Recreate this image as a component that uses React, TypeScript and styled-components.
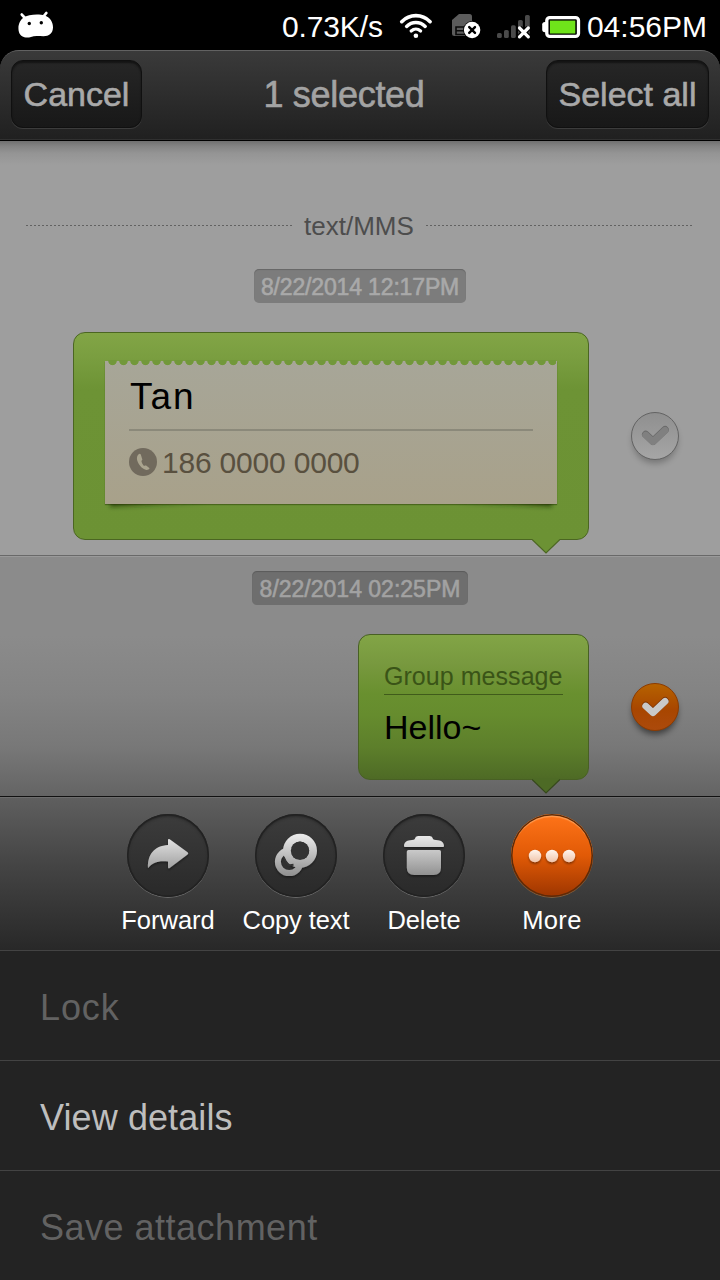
import React from 'react';
import styled, { createGlobalStyle } from 'styled-components';

const Global = createGlobalStyle`
  * { box-sizing: border-box; }
  html, body { margin: 0; padding: 0; background: #000; }
  body { font-family: "Liberation Sans", Arial, sans-serif; font-weight: 400; overflow: hidden; }
  svg { display: block; flex: none; }
`;

const Screen = styled.div`
  width: 720px;
  height: 1280px;
  display: flex;
  flex-direction: column;
  background: #000;
  overflow: hidden;
`;

/* ---------- status bar ---------- */

const StatusBar = styled.header`
  height: 50px;
  flex: none;
  display: flex;
  align-items: center;
  padding: 2px 13px 0 18px;
  color: #fff;
`;

const StatusText = styled.span<{ $spacing?: number }>`
  padding-top: 2px;
  font-size: 30px;
  line-height: 34px;
  white-space: nowrap;
  letter-spacing: ${(p) => p.$spacing ?? 0}px;
`;

const StatusIcons = styled.div`
  display: flex;
  align-items: center;
  margin: 0 6px 0 16px;
`;

const Spacer = styled.div`
  flex: 1;
`;

const Gap = styled.span<{ $w: number }>`
  width: ${(p) => p.$w}px;
  flex: none;
`;

/* ---------- title bar ---------- */

const TitleBar = styled.div`
  height: 91px;
  flex: none;
  display: flex;
  align-items: flex-start;
  justify-content: space-between;
  padding: 9px 11px 0;
  border-top: 1px solid #626262;
  border-bottom: 1px solid #000;
  border-radius: 19px 19px 0 0;
  background: linear-gradient(#3a3a3a, #202020);
  box-shadow: inset 0 -1px 0 #303030;
`;

const BarButton = styled.button<{ $width: number }>`
  width: ${(p) => p.$width}px;
  height: 68px;
  padding: 0 0 1px;
  border: 1px solid #101010;
  border-radius: 12px;
  background: linear-gradient(#262626, #181818);
  box-shadow: 0 1px 0 #3c3c3c, inset 0 2px 2px #131313;
  color: #a9a9a9;
  font: 34px/40px "Liberation Sans", Arial, sans-serif;
  -webkit-text-stroke: 0.6px #a9a9a9;
  white-space: nowrap;
`;

const Title = styled.h1`
  margin: 0;
  font-size: 36px;
  font-weight: 400;
  line-height: 70px;
  letter-spacing: -0.3px;
  color: #a3a3a3;
  -webkit-text-stroke: 0.6px #a3a3a3;
`;

/* ---------- conversation ---------- */

const Section = styled.section<{ $selected?: boolean }>`
  flex: none;
  display: flex;
  flex-direction: column;
  align-items: center;
  height: ${(p) => (p.$selected ? 240 : 415)}px;
  padding-top: ${(p) => (p.$selected ? 15 : 70)}px;
  border-bottom: ${(p) => (p.$selected ? 'none' : '1px solid #696969')};
  box-shadow: ${(p) => (p.$selected ? 'inset 0 1px 0 #9a9a9a' : 'none')};
  background: ${(p) =>
    p.$selected
      ? 'linear-gradient(#8b8b8b 0, #8b8b8b 80px, #838383 140px, #787878 190px, #646464 240px)'
      : 'linear-gradient(#707070 0, #838383 5px, #949494 12px, #9e9e9e 24px)'};
`;

const Channel = styled.div`
  align-self: stretch;
  display: flex;
  align-items: center;
  gap: 12px;
  padding: 0 27px 0 26px;
  height: 30px;
  margin-bottom: 28px;
  font-size: 26px;
  line-height: 30px;
  color: #4d4d4d;
`;

const DottedRule = styled.i<{ $width: number }>`
  flex: none;
  width: ${(p) => p.$width}px;
  height: 1px;
  margin-bottom: 1px;
  background: repeating-linear-gradient(90deg, #626262 0 2px, #9e9e9e 2px 4px);
`;

const DatePill = styled.time<{ $selected?: boolean; $spacing?: number }>`
  height: 34px;
  width: ${(p) => (p.$selected ? 216 : 212)}px;
  display: flex;
  justify-content: center;
  border-radius: 5px;
  background: ${(p) => (p.$selected ? '#6e6e6e' : '#7c7c7c')};
  box-shadow: inset 0 1px 1px rgba(0, 0, 0, 0.18);
  color: ${(p) => (p.$selected ? '#a2a2a2' : '#a9a9a9')};
  -webkit-text-stroke: 0.6px currentColor;
  font-size: 23px;
  line-height: 36px;
  white-space: nowrap;
  letter-spacing: ${(p) => p.$spacing ?? 0}px;
`;

const MessageRow = styled.div`
  align-self: stretch;
  display: flex;
  align-items: center;
  justify-content: flex-end;
  gap: 42px;
  margin-top: 29px;
  padding-right: 41px;
`;

const Bubble = styled.article<{ $w: number; $h: number; $dim?: boolean }>`
  position: relative;
  width: ${(p) => p.$w}px;
  height: ${(p) => p.$h}px;
  padding: ${(p) => (p.$dim ? '26px 25px' : '28px 31px')};
  border: 1px solid ${(p) => (p.$dim ? '#486024' : '#4b6622')};
  border-radius: 12px;
  background: ${(p) =>
    p.$dim
      ? 'linear-gradient(#82a546 0, #78993f 28px, #69902f 58px, #668c2e 80px, #5d7f2b 112px, #4d6925 146px)'
      : 'linear-gradient(#82a546 0, #7a9e40 24px, #6d9335 56px, #6c9234 100%)'};
`;

const Tail = styled.svg`
  position: absolute;
  right: 28px;
  bottom: -15px;
`;

const ContactCard = styled.div`
  position: relative;
  height: 143px;
  padding: 16px 24px 0;
  background: linear-gradient(#a7a698, #a8a18a);
  box-shadow: 0 1px 1px rgba(30, 50, 0, 0.45);

  &::before {
    content: '';
    position: absolute;
    top: -1px;
    left: 2px;
    width: 449px;
    height: 6px;
    background: radial-gradient(circle at 5.5px 1px, #72983a 3.8px, rgba(114, 152, 58, 0) 4.6px) 0 0 / 11px 6px repeat-x;
  }
`;

const CardShadow = styled.svg`
  position: absolute;
  left: 0;
  bottom: -12px;
`;

const ContactName = styled.div`
  height: 54px;
  padding-left: 1px;
  font-size: 37px;
  line-height: 39px;
  letter-spacing: 1.9px;
  color: #000;
  border-bottom: 2px solid #8b897a;
`;

const ContactPhone = styled.div`
  display: flex;
  align-items: center;
  gap: 4px;
  margin-top: 15px;
  font-size: 30px;
  line-height: 34px;
  letter-spacing: -0.2px;
  color: #59503f;
`;

const GroupLabel = styled.div`
  height: 34px;
  font-size: 25px;
  line-height: 31px;
  letter-spacing: 0.05px;
  white-space: nowrap;
  color: #3a5417;
  border-bottom: 1px solid #405b1b;
`;

const MessageText = styled.p`
  margin: 12px 0 0;
  font-size: 34px;
  line-height: 40px;
  color: #000;
`;

/* ---------- action panel ---------- */

const Toolbar = styled.nav`
  flex: none;
  height: 154px;
  display: flex;
  justify-content: center;
  padding-top: 16px;
  border-top: 1px solid #111;
  box-shadow: inset 0 1px 0 #6d6d6d;
  background: linear-gradient(#5f5f5f, #444 45%, #282828);
`;

const Action = styled.div<{ $spacing?: number }>`
  width: 128px;
  display: flex;
  flex-direction: column;
  align-items: center;
  font-size: 25.5px;
  line-height: 30px;
  letter-spacing: ${(p) => p.$spacing ?? 0}px;
  color: #fff;
  white-space: nowrap;
`;

const Disc = styled.div<{ $active?: boolean }>`
  width: 82px;
  height: 83px;
  margin: 1px 0 8px;
  border-radius: 50%;
  background: ${(p) =>
    p.$active ? 'linear-gradient(#ff7419, #e15a06 50%, #9d3500)' : 'linear-gradient(#3c3c3c, #292929)'};
  box-shadow: ${(p) =>
    p.$active
      ? 'inset 0 0 0 1.5px #5c2a08, inset 0 3px 1px 0 #ff9b50, 0 1px 0 #80603f'
      : 'inset 0 0 0 1.5px #222, inset 0 2px 3px #202020, 0 1px 0 #6a6a6a'};
`;

const MenuItem = styled.div<{ $disabled?: boolean; $spacing?: number }>`
  flex: none;
  height: 110px;
  padding: 36px 40px 0;
  border-top: 1px solid #434343;
  background: #232323;
  font-size: 36px;
  line-height: 42px;
  letter-spacing: ${(p) => p.$spacing ?? 0}px;
  color: ${(p) => (p.$disabled ? '#626262' : '#bebebe')};
`;

/* ---------- drawings ---------- */

const DroidIcon = () => (
  <svg width="36" height="30" viewBox="18 11 36 30">
    <path
      d="M24.5 17.5 21.8 14.6M43.5 16.5 46.3 13"
      stroke="#fff"
      strokeWidth="2.8"
      strokeLinecap="round"
    />
    <path
      d="M23.5 17.6C28 14.5 39 13.8 44.5 15.6C50 17.4 53 22 53 27.3C53 33.2 49 36.3 43.5 36.3C39 36.3 34.5 35.6 31 36.9C26 38.6 20.5 37 19 32.3C17.3 26.5 19.6 20.3 23.5 17.6Z"
      fill="#fff"
    />
    <circle cx="29.3" cy="23.5" r="1.7" fill="#000" />
    <circle cx="41.3" cy="22.7" r="1.7" fill="#000" />
  </svg>
);

const WifiIcon = () => (
  <svg width="34" height="28" viewBox="399 12 34 28" fill="none" stroke="#fff" strokeLinecap="round">
    <path d="M401.7 21.7C409.7 13.6 422.1 13.6 430.1 21.7" strokeWidth="3.6" />
    <path d="M406.6 26.4C412 21.2 419.8 21.2 425.2 26.4" strokeWidth="3.5" />
    <path d="M411.2 30.9C414 28.5 417.8 28.5 420.6 30.9" strokeWidth="3.3" />
    <circle cx="415.9" cy="35.7" r="2.3" fill="#fff" stroke="none" />
  </svg>
);

const SimIcon = () => (
  <svg width="30" height="28" viewBox="451 12 30 28">
    <path d="M459 14H469.5A2.5 2.5 0 0 1 472 16.5V36H454.5A2.5 2.5 0 0 1 452 33.5V20Z" fill="#5c5c5c" />
    <path d="M466 27H456V34.500H466M456 30.700H465" stroke="#0a0a0a" strokeWidth="1.6" fill="none" />
    <circle cx="472.1" cy="30" r="9" fill="#000" />
    <circle cx="472.1" cy="30" r="8.2" fill="#fff" />
    <path d="M469.2 27.1 475 32.9M475 27.1 469.2 32.9" stroke="#000" strokeWidth="2.4" strokeLinecap="round" />
  </svg>
);

const SignalIcon = () => (
  <svg width="34" height="28" viewBox="497 12 34 28">
    <g fill="#4a4a4a">
      <rect x="497" y="33" width="4.8" height="5" rx="1.6" />
      <rect x="504" y="30" width="4.8" height="8" rx="1.6" />
      <rect x="511" y="25.3" width="4.8" height="12.7" rx="1.6" />
      <rect x="518" y="20" width="4.8" height="18" rx="1.6" />
      <rect x="525" y="15" width="4.8" height="23" rx="1.6" />
    </g>
    <path d="M519.5 28 528.3 36.8M528.3 28 519.5 36.8" stroke="#000" strokeWidth="5.5" />
    <path d="M519.5 28 528.3 36.8M528.3 28 519.5 36.8" stroke="#fff" strokeWidth="3.2" strokeLinecap="round" />
  </svg>
);

const BatteryIcon = () => (
  <svg width="39" height="28" viewBox="542 12 39 28">
    <path d="M548 22H545Q542.2 22 542.2 24.5V29.5Q542.2 32.3 545 32.3H548Z" fill="#fff" />
    <rect x="546.8" y="17.6" width="31.7" height="18.8" rx="3" fill="#000" stroke="#fff" strokeWidth="3.3" />
    <rect x="550" y="20.6" width="25.3" height="12.9" fill="#6fe31a" />
  </svg>
);

const BubbleTail = ({ fill, stroke }: { fill: string; stroke: string }) => (
  <Tail width="28" height="16" viewBox="0 0 28 16">
    <path d="M0 0H28V1.5L14 15L0 1.5Z" fill={fill} />
    <path d="M0 1.5 14 15 28 1.5" fill="none" stroke={stroke} strokeWidth="1.2" />
  </Tail>
);

const PhoneIcon = () => (
  <svg width="29" height="30" viewBox="0 0 29 30">
    <circle cx="14" cy="14" r="14" fill="#716a5d" />
    <path
      d="M10.2 5.8C8 7.3 7.2 10.5 8.9 14.3C10.7 18.3 14.2 21.6 17.3 21.9C19 22 20 21.3 20.6 20.2L16.8 17.3C15.9 18 15.2 18.1 14.3 17.2C13.3 16 12.7 14.8 12.5 13.6C12.4 12.6 13 12.2 13.4 11.7L11.7 6.2Z"
      fill="#aaa48f"
    />
  </svg>
);

const CheckMark = ({ checked }: { checked?: boolean }) => (
  <svg width="48" height="48" viewBox="0 0 48 48" overflow="visible">
    <defs>
      <linearGradient id="checkOn" x1="0" y1="0" x2="0" y2="1">
        <stop offset="0" stopColor="#b66300" />
        <stop offset="0.55" stopColor="#a84600" />
        <stop offset="1" stopColor="#ac4a0c" />
      </linearGradient>
      <linearGradient id="checkOff" x1="0" y1="0" x2="0" y2="1">
        <stop offset="0" stopColor="#8f8f8f" />
        <stop offset="1" stopColor="#a6a6a6" />
      </linearGradient>
      <filter id="checkShadow" x="-30%" y="-30%" width="160%" height="180%">
        <feGaussianBlur stdDeviation="3" />
      </filter>
    </defs>
    <circle cx="24" cy="29" r="22.5" fill="#000" opacity={checked ? 0.5 : 0.25} filter="url(#checkShadow)" />
    <circle
      cx="24"
      cy="24"
      r="23.5"
      fill={checked ? 'url(#checkOn)' : 'url(#checkOff)'}
      stroke={checked ? '#8c3b00' : '#636363'}
      strokeWidth="1"
    />
    <path
      d="M14.7 23 22 29.8 34.1 18.3"
      fill="none"
      stroke={checked ? '#7a3100' : '#686868'}
      strokeWidth="7.4"
      strokeLinecap="round"
      strokeLinejoin="round"
      transform="translate(0 -0.6)"
    />
    <path
      d="M14.7 23 22 29.8 34.1 18.3"
      fill="none"
      stroke={checked ? '#c9c9c9' : '#808080'}
      strokeWidth="6.8"
      strokeLinecap="round"
      strokeLinejoin="round"
    />
  </svg>
);

const GlyphDefs = () => (
  <defs>
    <linearGradient id="metal" gradientUnits="userSpaceOnUse" x1="0" y1="22" x2="0" y2="62">
      <stop offset="0" stopColor="#e9e9e9" />
      <stop offset="1" stopColor="#8f8f8f" />
    </linearGradient>
    <linearGradient id="peach" gradientUnits="userSpaceOnUse" x1="0" y1="36" x2="0" y2="48">
      <stop offset="0" stopColor="#fff4ec" />
      <stop offset="1" stopColor="#f0c5ab" />
    </linearGradient>
    <filter id="drop" x="-20%" y="-20%" width="140%" height="150%">
      <feDropShadow dx="0" dy="1.5" stdDeviation="1" floodColor="#000" floodOpacity="0.45" />
    </filter>
  </defs>
);

const ForwardGlyph = () => (
  <svg width="82" height="83" viewBox="0 0 82 83">
    <GlyphDefs />
    <path
      d="M21 54.3C20.2 41 27 31.6 41 31V26Q41.2 24.3 42.7 25.3L60.6 38.2Q62 39.4 60.6 40.6L42.7 54Q41.2 54.9 41 53.5V47.5C32 46.3 25 48.5 21 54.3Z"
      fill="url(#metal)"
      filter="url(#drop)"
    />
  </svg>
);

const CopyGlyph = () => (
  <svg width="82" height="83" viewBox="0 0 82 83">
    <g filter="url(#drop)">
      <circle cx="34.2" cy="47.8" r="11.3" fill="none" stroke="url(#metal)" strokeWidth="6" />
      <circle cx="45" cy="36.7" r="13.1" fill="none" stroke="url(#metal)" strokeWidth="7.8" />
    </g>
    <circle cx="45" cy="36.7" r="9.2" fill="#333" />
    <path d="M28.5 43 30.5 47 33.5 51.5 38.5 50.8" fill="none" stroke="#333" strokeWidth="2" />
  </svg>
);

const TrashGlyph = () => (
  <svg width="82" height="83" viewBox="0 0 82 83">
    <g fill="url(#metal)" filter="url(#drop)">
      <path d="M21 32.2C21 28.5 23.5 26.5 27 26.3C30 26 32 25.8 32 24.5Q32.3 22 35 22H46.8Q49.5 22 49.8 24.5C49.8 25.8 52 26 55 26.3C58.5 26.5 61 28.5 61 32.2Q61 33 60 33H22Q21 33 21 32.2Z" />
      <path d="M25.5 36H56.3Q58 36 58 37.8V53.5Q58 61 50.5 61H31.3Q23.8 61 23.8 53.5V37.8Q23.8 36 25.5 36Z" />
    </g>
  </svg>
);

const MoreGlyph = () => (
  <svg width="82" height="83" viewBox="0 0 82 83">
    <g fill="url(#peach)" filter="url(#drop)">
      <circle cx="24" cy="42" r="6.2" />
      <circle cx="41" cy="42" r="6.2" />
      <circle cx="58" cy="42" r="6.2" />
    </g>
  </svg>
);

const actions = [
  { label: 'Forward', Glyph: ForwardGlyph, spacing: 0 },
  { label: 'Copy text', Glyph: CopyGlyph, spacing: -0.1 },
  { label: 'Delete', Glyph: TrashGlyph, spacing: -0.1 },
  { label: 'More', Glyph: MoreGlyph, spacing: 0.4, active: true },
];

const menu = [
  { label: 'Lock', disabled: true, spacing: 0.9 },
  { label: 'View details', disabled: false, spacing: 0.1 },
  { label: 'Save attachment', disabled: true, spacing: 0.5 },
];

export default function App() {
  return (
    <Screen>
      <Global />
      <StatusBar>
        <DroidIcon />
        <Spacer />
        <StatusText $spacing={-0.1}>0.73K/s</StatusText>
        <StatusIcons>
          <WifiIcon />
          <Gap $w={18} />
          <SimIcon />
          <Gap $w={16} />
          <SignalIcon />
          <Gap $w={11} />
          <BatteryIcon />
        </StatusIcons>
        <StatusText>04:56PM</StatusText>
      </StatusBar>

      <TitleBar>
        <BarButton $width={131}>Cancel</BarButton>
        <Title>1 selected</Title>
        <BarButton $width={163}>Select all</BarButton>
      </TitleBar>

      <Section>
        <Channel>
          <DottedRule $width={266} />
          text/MMS
          <DottedRule $width={267} />
        </Channel>
        <DatePill $spacing={-0.15}>8/22/2014 12:17PM</DatePill>
        <MessageRow>
          <Bubble $w={516} $h={208}>
            <ContactCard>
              <ContactName>Tan</ContactName>
              <ContactPhone>
                <PhoneIcon />
                186 0000 0000
              </ContactPhone>
              <CardShadow width="452" height="12" viewBox="0 0 452 12">
                <defs>
                  <linearGradient id="curl">
                    <stop offset="0" stopColor="#1e3200" stopOpacity="0.7" />
                    <stop offset="0.22" stopColor="#1e3200" stopOpacity="0" />
                    <stop offset="0.78" stopColor="#1e3200" stopOpacity="0" />
                    <stop offset="1" stopColor="#1e3200" stopOpacity="0.7" />
                  </linearGradient>
                  <filter id="curlBlur" x="-2%" y="-100%" width="104%" height="300%">
                    <feGaussianBlur stdDeviation="2.2" />
                  </filter>
                </defs>
                <path d="M5 -5H447V3Q226 -5 5 3Z" fill="url(#curl)" filter="url(#curlBlur)" />
              </CardShadow>
            </ContactCard>
            <BubbleTail fill="#6c9234" stroke="#4b6622" />
          </Bubble>
          <CheckMark />
        </MessageRow>
      </Section>

      <Section $selected>
        <DatePill $selected>8/22/2014 02:25PM</DatePill>
        <MessageRow>
          <Bubble $w={231} $h={146} $dim>
            <GroupLabel>Group message</GroupLabel>
            <MessageText>Hello~</MessageText>
            <BubbleTail fill="#4d6a25" stroke="#36481c" />
          </Bubble>
          <CheckMark checked />
        </MessageRow>
      </Section>

      <Toolbar>
        {actions.map(({ label, Glyph, spacing, active }) => (
          <Action key={label} $spacing={spacing}>
            <Disc $active={active}>
              <Glyph />
            </Disc>
            {label}
          </Action>
        ))}
      </Toolbar>
      {menu.map((item) => (
        <MenuItem key={item.label} $disabled={item.disabled} $spacing={item.spacing}>
          {item.label}
        </MenuItem>
      ))}
    </Screen>
  );
}
